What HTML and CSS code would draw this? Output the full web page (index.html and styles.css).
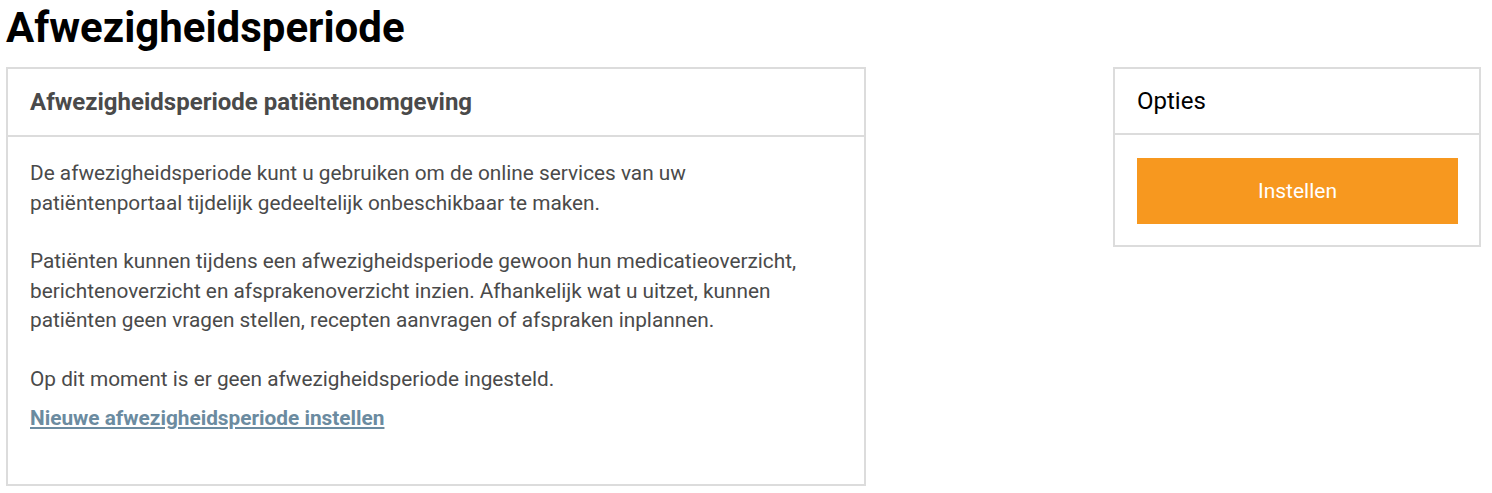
FILE: index.html
```html
<!DOCTYPE html>
<html lang="nl">
<head>
    <meta charset="UTF-8">
    <meta name="viewport" content="width=device-width, initial-scale=1.0">
    <title>Afwezigheidsperiode</title>
    <link rel="stylesheet" href="styles.css">
</head>
<body>
<div class="page">
    <h1 class="page-title">Afwezigheidsperiode</h1>

    <div class="row">
        <div class="panel panel-main">
            <div class="panel-heading">
                <h2>Afwezigheidsperiode patiëntenomgeving</h2>
            </div>
            <div class="panel-body">
                <p>De afwezigheidsperiode kunt u gebruiken om de online services van uw patiëntenportaal tijdelijk gedeeltelijk onbeschikbaar te maken.</p>
                <p>Patiënten kunnen tijdens een afwezigheidsperiode gewoon hun medicatieoverzicht, berichtenoverzicht en afsprakenoverzicht inzien. Afhankelijk wat u uitzet, kunnen patiënten geen vragen stellen, recepten aanvragen of afspraken inplannen.</p>
                <p class="status">Op dit moment is er geen afwezigheidsperiode ingesteld.</p>
                <p><a href="#" class="link">Nieuwe afwezigheidsperiode instellen</a></p>
            </div>
        </div>

        <div class="panel panel-options">
            <div class="panel-heading">
                <h3>Opties</h3>
            </div>
            <div class="panel-body">
                <button class="btn-orange">Instellen</button>
            </div>
        </div>
    </div>
</div>
</body>
</html>
```

FILE: styles.css
```css
body {
  margin: 0;
  padding: 0;
  font-family: Roboto, "Noto Sans", sans-serif;
  color: #4a4a4a;
  background: #fff;
}

.page {
  padding: 0 11px 0 6px;
}

.page-title {
  margin: 0;
  padding-top: 4px;
  height: 63px;
  font-size: 42px;
  line-height: 48px;
  font-weight: 700;
  color: #000;
}

.row {
  display: flex;
  justify-content: space-between;
  align-items: flex-start;
}

.panel {
  border: 2px solid #dcdcdc;
  background: #fff;
}

.panel-main {
  width: 856px;
}

.panel-options {
  width: 364px;
}

.panel-heading {
  border-bottom: 2px solid #dcdcdc;
  padding: 0 22px;
  display: flex;
  align-items: center;
}

.panel-main .panel-heading {
  height: 66px;
}

.panel-options .panel-heading {
  height: 64px;
}

.panel-heading h2 {
  margin: 0;
  font-size: 24px;
  font-weight: 700;
  color: #4a4a4a;
}

.panel-heading h3 {
  margin: 0;
  font-size: 24px;
  font-weight: 400;
  color: #000;
}

.panel-main .panel-body {
  padding: 22px 30px 0 22px;
  height: 325px;
}

.panel-body p {
  margin: 0 0 29px;
  font-size: 20.8px;
  line-height: 29.6px;
}

.panel-body p.status {
  margin-bottom: 9px;
}

.panel-body p:last-child {
  margin-bottom: 0;
}

.link {
  color: #6b8ba0;
  font-weight: 700;
  text-decoration: underline;
}

.panel-options .panel-body {
  padding: 23px 21px 21px 22px;
}

.btn-orange {
  display: block;
  width: 100%;
  height: 66px;
  border: none;
  background-color: #f7981f;
  color: #fff;
  font-family: Roboto, "Noto Sans", sans-serif;
  font-size: 21px;
  cursor: pointer;
}
```
